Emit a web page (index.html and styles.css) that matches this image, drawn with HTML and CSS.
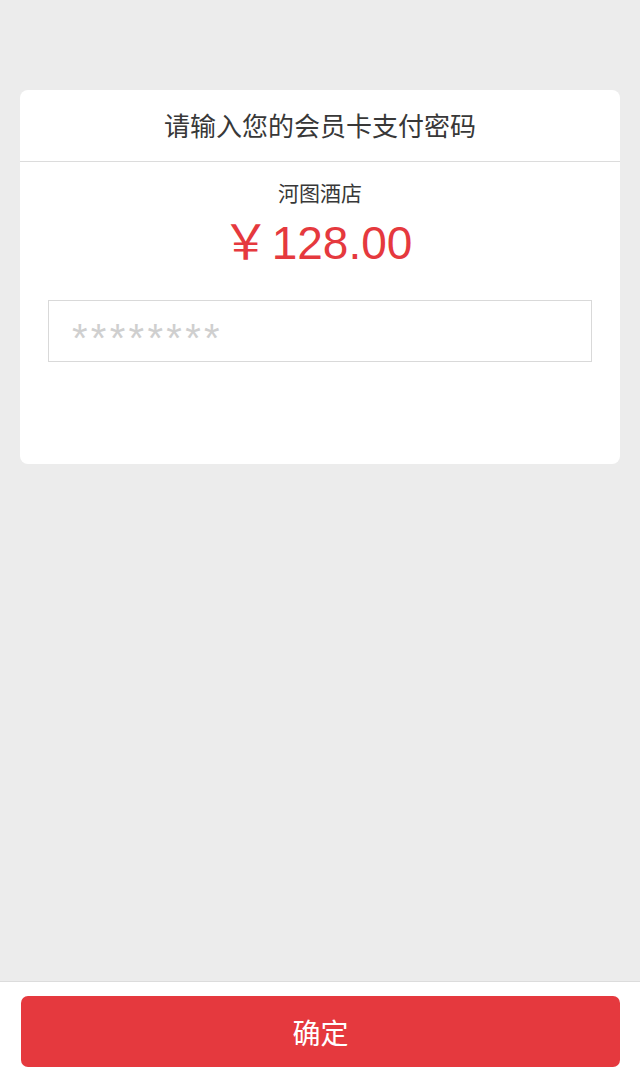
FILE: index.html
```html
<!DOCTYPE html>
<html lang="zh-CN">
<head>
<meta charset="utf-8">
<title>会员卡支付</title>
<link rel="stylesheet" href="styles.css">
</head>
<body>
<div class="page">
  <main class="content">
    <section class="card">
      <header class="card-header">请输入您的会员卡支付密码</header>
      <div class="card-body">
        <div class="store">河图酒店</div>
        <div class="amount"><span class="yen">￥</span>128.00</div>
        <div class="pwd-box"><span class="pwd-placeholder">********</span></div>
      </div>
    </section>
  </main>
  <footer class="footer">
    <button class="confirm" type="button">确定</button>
  </footer>
</div>
</body>
</html>
```
FILE: styles.css
```css
* { box-sizing: border-box; }
html, body { margin: 0; padding: 0; }
body {
  background: #ececec;
  font-family: "Liberation Sans", "Noto Sans CJK SC", sans-serif;
  color: #333;
  width: 640px;
  height: 1080px;
  overflow: hidden;
}
.page {
  display: flex;
  flex-direction: column;
  height: 1080px;
}
.content {
  flex: 1;
  padding: 90px 20px 0;
}
.card {
  background: #fff;
  border-radius: 8px;
  height: 374px;
}
.card-header {
  height: 72px;
  line-height: 74px;
  text-align: center;
  font-size: 26px;
  color: #383838;
  border-bottom: 1px solid #dcdcdc;
}
.card-body {
  padding: 16px 28px 0;
  display: flex;
  flex-direction: column;
  align-items: center;
}
.store {
  font-size: 21px;
  line-height: 32px;
  color: #383838;
}
.amount {
  font-size: 46px;
  line-height: 56px;
  color: #e5393e;
  margin-top: 5px;
  margin-right: 6px;
}
.yen { font-size: 48px; margin-right: 2px; }
.pwd-box {
  align-self: stretch;
  margin-top: 29px;
  height: 62px;
  border: 1px solid #d9d9d9;
  padding: 0 0 0 23px;
  display: flex;
  align-items: center;
}
.pwd-placeholder {
  color: #cfcfcf;
  font-size: 40px;
  letter-spacing: 3.3px;
  line-height: 1;
  padding-top: 14px;
}
.footer {
  height: 99px;
  background: #fff;
  border-top: 1px solid #dcdcdc;
  padding: 14px 20px 0 21px;
}
.confirm {
  display: block;
  width: 100%;
  height: 71px;
  border: none;
  border-radius: 7px;
  background: #e5393e;
  color: #fff;
  font-family: "Noto Sans CJK SC", sans-serif;
  font-size: 28px;
  padding: 0;
}
```
